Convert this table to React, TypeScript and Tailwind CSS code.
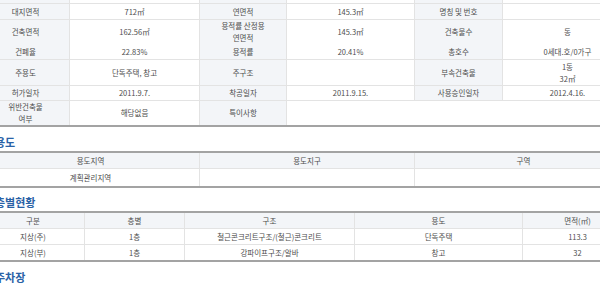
import React from "react";

const F = { fontFamily: '"Noto Sans CJK KR", "Noto Sans", sans-serif' };

function Cell({
  children,
  label,
  last,
  span3,
}: {
  children?: React.ReactNode;
  label?: boolean;
  last?: boolean;
  span3?: boolean;
}) {
  return (
    <div
      className={
        "flex items-center justify-center text-center leading-[12px] whitespace-pre-line " +
        (label ? "bg-[#f3f5f8] " : "bg-white ") +
        (last ? "" : "border-r border-[#e3e3e3] ") +
        (span3 ? "col-span-3" : "")
      }
    >
      {children}
    </div>
  );
}

const T1 = "grid grid-cols-[88px_130px_87px_128px_88px_129px] border-b border-[#e3e3e3]";

function Row1({ h, cells }: { h: string; cells: (string | null)[] }) {
  return (
    <div className={T1 + " " + h}>
      {cells.map((c, i) => (
        <Cell key={i} label={i % 2 === 0} last={i === 5}>
          {c}
        </Cell>
      ))}
    </div>
  );
}

function Title({ text, cls }: { text: string; cls: string }) {
  return (
    <div className={"pl-[13px] text-[11px] leading-[14px] font-bold text-[#2a62a6] whitespace-nowrap " + cls}>{text}</div>
  );
}

export default function App() {
  return (
    <div className="w-[600px] h-[283px] overflow-hidden bg-white" style={F}>
      <div className="w-[650px] -ml-[18px] text-[7.5px] text-[#4d4d4d]">
        {/* table 1 */}
        <div className="border-b-2 border-[#a3a3a3]">
          <Row1 h="h-[4px]" cells={[null, null, null, null, null, null]} />
          <Row1 h="h-[16px]" cells={["대지면적", "712㎡", "연면적", "145.3㎡", "명칭 및 번호", null]} />
          <Row1 h="h-[24px]" cells={["건축면적", "162.56㎡", "용적률 산정용\n연면적", "145.3㎡", "건축물수", "동"]} />
          <Row1 h="h-[16px]" cells={["건폐율", "22.83%", "용적률", "20.41%", "총호수", "0세대.호/0가구"]} />
          <Row1 h="h-[26px]" cells={["주용도", "단독주택, 창고", "주구조", null, "부속건축물", "1동\n32㎡"]} />
          <Row1 h="h-[15px]" cells={["허가일자", "2011.9.7.", "착공일자", "2011.9.15.", "사용승인일자", "2012.4.16."]} />
          <div className="grid grid-cols-[88px_130px_87px_128px_88px_129px] h-[24px]">
            <Cell label>{"위반건축물\n여부"}</Cell>
            <Cell>해당없음</Cell>
            <Cell label>특이사항</Cell>
            <Cell span3 last />
          </div>
        </div>

        <Title text="용도" cls="h-[24px] pt-[8px]" />

        {/* table 2 */}
        <div className="border-t-2 border-b-2 border-[#a3a3a3]">
          <div className="grid grid-cols-[218px_215px_217px] h-[16px] border-b border-[#e3e3e3] bg-[#f3f5f8]">
            <Cell label>용도지역</Cell>
            <Cell label>용도지구</Cell>
            <Cell label last>구역</Cell>
          </div>
          <div className="grid grid-cols-[218px_215px_217px] h-[17px]">
            <Cell>계획관리지역</Cell>
            <Cell />
            <Cell last />
          </div>
        </div>

        <Title text="층별현황" cls="h-[23px] pt-[7px]" />

        {/* table 3 */}
        <div className="border-t-2 border-b-2 border-[#a3a3a3]">
          <div className="grid grid-cols-[103px_100px_170px_168px_109px] h-[16px] border-b border-[#e3e3e3]">
            <Cell label>구분</Cell>
            <Cell label>층별</Cell>
            <Cell label>구조</Cell>
            <Cell label>용도</Cell>
            <Cell label last>면적(㎡)</Cell>
          </div>
          <div className="grid grid-cols-[103px_100px_170px_168px_109px] h-[16px] border-b border-[#e3e3e3]">
            <Cell>지상(주)</Cell>
            <Cell>1층</Cell>
            <Cell>철근콘크리트구조/(철근)콘크리트</Cell>
            <Cell>단독주택</Cell>
            <Cell last>113.3</Cell>
          </div>
          <div className="grid grid-cols-[103px_100px_170px_168px_109px] h-[15px]">
            <Cell>지상(부)</Cell>
            <Cell>1층</Cell>
            <Cell>강파이프구조/알바</Cell>
            <Cell>창고</Cell>
            <Cell last>32</Cell>
          </div>
        </div>

        <Title text="주차장" cls="h-[23px] pt-[8px]" />
      </div>
    </div>
  );
}
